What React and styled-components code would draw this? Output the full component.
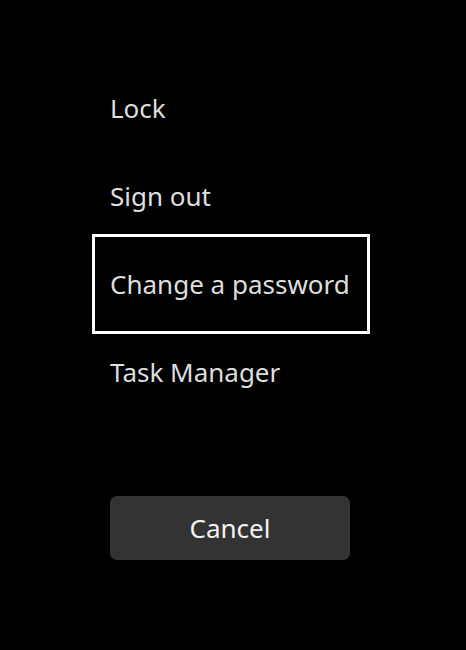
import React from "react";
import styled, { createGlobalStyle } from "styled-components";

const GlobalStyle = createGlobalStyle`
    html, body {
        margin: 0;
        padding: 0;
        background: #000;
    }
    body {
        font-family: "Noto Sans", "Open Sans", sans-serif;
    }
`;

const Screen = styled.div`
    width: 466px;
    height: 650px;
    background: #000;
    display: flex;
    flex-direction: column;
    padding: 64px 0 0 98px;
    box-sizing: border-box;
`;

const Menu = styled.div`
    display: flex;
    flex-direction: column;
`;

const Item = styled.div`
    width: 266px;
    height: 88px;
    box-sizing: border-box;
    padding-left: 12px;
    display: flex;
    align-items: center;
    color: #dedede;
    font-size: 26px;
    outline: ${p => (p.$focused ? "3px solid #fff" : "none")};
    outline-offset: 3px;
`;

const CancelButton = styled.button`
    margin: 80px 0 0 12px;
    width: 240px;
    height: 64px;
    border: none;
    border-radius: 7px;
    background: #333333;
    color: #f2f2f2;
    font-family: inherit;
    font-size: 26px;
    display: flex;
    align-items: center;
    justify-content: center;
`;

const items = ["Lock", "Sign out", "Change a password", "Task Manager"];

let App = () => {
    return (
        <Screen>
            <GlobalStyle />
            <Menu>
                {items.map(label => (
                    <Item key={label} $focused={label === "Change a password"}>
                        {label}
                    </Item>
                ))}
            </Menu>
            <CancelButton>Cancel</CancelButton>
        </Screen>
    );
};

export default App;
